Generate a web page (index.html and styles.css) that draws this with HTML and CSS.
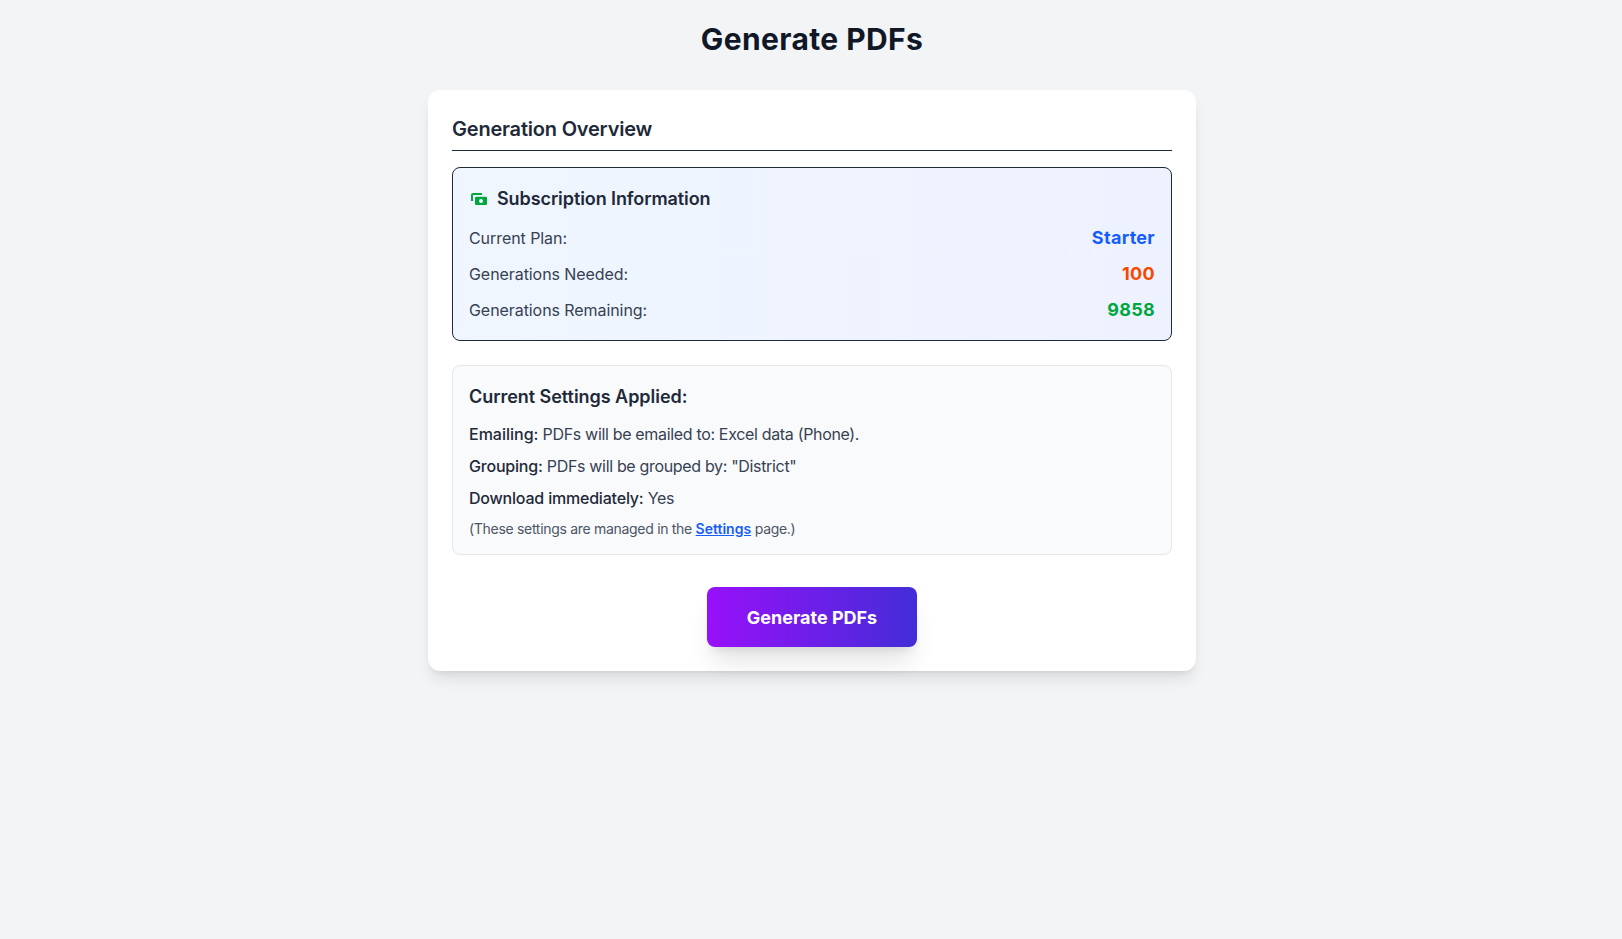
FILE: index.html
```html
<!DOCTYPE html>
<html lang="en">
<head>
    <meta charset="UTF-8">
    <title>Generate PDFs</title>
    <link rel="stylesheet" href="styles.css">
</head>
<body>
<div class="main">
    <h1 class="page-title">Generate PDFs</h1>
    <div class="card">
        <h2 class="card-title">Generation Overview</h2>
        <div class="sub-box">
            <h3 class="sub-title">
                <svg class="sub-icon" viewBox="0 0 16 12" fill="currentColor">
                    <path d="M0 2a2 2 0 0 1 2-2h9v2H2v6H0z"/>
                    <path fill-rule="evenodd" d="M4 5a1.200 1.200 0 0 1 1.200-1.200h9.600A1.200 1.200 0 0 1 16 5v5.800a1.200 1.200 0 0 1-1.200 1.200H5.200A1.200 1.200 0 0 1 4 10.800zm6 5a2 2 0 1 0 0-4 2 2 0 0 0 0 4z"/>
                </svg>
                Subscription Information
            </h3>
            <div class="sub-row"><span>Current Plan:</span><span class="val val-blue">Starter</span></div>
            <div class="sub-row"><span>Generations Needed:</span><span class="val val-orange">100</span></div>
            <div class="sub-row"><span>Generations Remaining:</span><span class="val val-green">9858</span></div>
        </div>
        <div class="settings-box">
            <h3 class="settings-title">Current Settings Applied:</h3>
            <p class="settings-line"><span class="settings-key settings-key-short">Emailing:</span> PDFs will be emailed to: Excel data (Phone).</p>
            <p class="settings-line"><span class="settings-key">Grouping:</span> PDFs will be grouped by: "District"</p>
            <p class="settings-line"><span class="settings-key">Download immediately:</span> Yes</p>
            <p class="settings-note">(These settings are managed in the <a href="#">Settings</a> page.)</p>
        </div>
        <div class="actions">
            <button class="generate-btn">Generate PDFs</button>
        </div>
    </div>
</div>
</body>
</html>
```

FILE: styles.css
```css
*{
    box-sizing: border-box;
}
body{
    margin: 0;
    min-height: 939px;
    background: #f3f4f6;
    font-family: Inter, "Liberation Sans", sans-serif;
    color: #1e2939;
}
.main{
    padding: 20px 0 0 2px;
}
.page-title{
    margin: 0 0 32px 0;
    font-size: 30px;
    line-height: 38px;
    font-weight: 700;
    letter-spacing: 0.4px;
    text-align: center;
    color: #101828;
}
.card{
    width: 768px;
    margin: 0 auto;
    padding: 24px;
    background: #ffffff;
    border-radius: 12px;
    box-shadow: 0 10px 15px -3px rgba(0,0,0,0.1), 0 4px 6px -4px rgba(0,0,0,0.1);
}
.card-title{
    margin: 0 0 16px 0;
    padding: 1px 0 7px 0;
    border-bottom: 1px solid #1e2939;
    font-size: 20px;
    line-height: 28px;
    font-weight: 600;
    letter-spacing: -0.2px;
}
.sub-box{
    padding: 16px;
    border: 1px solid #1e2939;
    border-radius: 8px;
    background: linear-gradient(to right, #eff6ff, #eef2ff);
    margin-bottom: 24px;
}
.sub-title{
    display: flex;
    align-items: center;
    gap: 10px;
    margin: 0 0 12px 0;
    padding-top: 1px;
    height: 28px;
    font-size: 18px;
    line-height: 27px;
    font-weight: 600;
    letter-spacing: -0.09px;
}
.sub-icon{
    color: #00a63e;
    width: 16px;
    height: 12px;
    margin-left: 2px;
}
.sub-row{
    display: flex;
    justify-content: space-between;
    align-items: center;
    height: 28px;
    padding-bottom: 1px;
    margin-top: 8px;
    font-size: 16px;
    letter-spacing: -0.07px;
    color: #364153;
}
.val{
    font-size: 18px;
    font-weight: 700;
    letter-spacing: 0.3px;
}
.val-blue{
    color: #155dfc;
}
.val-orange{
    color: #f54900;
}
.val-green{
    color: #00a63e;
}
.settings-box{
    padding: 16px;
    border: 1px solid #e5e7eb;
    border-radius: 8px;
    background: #f9fafb;
}
.settings-title{
    margin: 0 0 12px 0;
    padding-top: 1px;
    height: 28px;
    font-size: 18px;
    line-height: 27px;
    font-weight: 600;
    letter-spacing: -0.04px;
}
.settings-line{
    margin: 0 0 8px 0;
    font-size: 16px;
    line-height: 24px;
    letter-spacing: -0.33px;
    color: #364153;
}
.settings-key{
    font-weight: 500;
    letter-spacing: -0.2px;
    color: #1e2939;
}
.settings-key-short{
    letter-spacing: 0;
}
.settings-note{
    margin: 0;
    padding-top: 1px;
    height: 20px;
    font-size: 14px;
    line-height: 19px;
    letter-spacing: -0.3px;
    color: #4a5565;
}
.settings-note a{
    color: #155dfc;
    font-weight: 600;
    letter-spacing: 0;
}
.actions{
    display: flex;
    justify-content: center;
    margin-top: 32px;
}
.generate-btn{
    width: 210px;
    height: 60px;
    border: 0;
    border-radius: 8px;
    background: linear-gradient(to right, #9810fa, #432dd7);
    color: #ffffff;
    font-family: inherit;
    font-size: 18px;
    font-weight: 700;
    box-shadow: 0 20px 25px -5px rgba(0,0,0,0.1), 0 8px 10px -6px rgba(0,0,0,0.1);
}
```
